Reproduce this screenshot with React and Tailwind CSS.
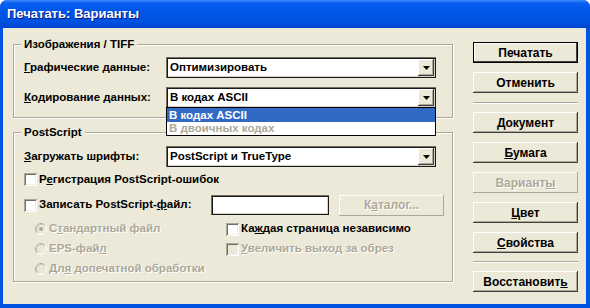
import React from "react";

const U = ({ children }) => <span className="underline underline-offset-[1px]">{children}</span>;

const dim = "text-[#aca899] [text-shadow:1px_1px_0_#fff]";
const raised = "shadow-[inset_-1px_-1px_#404040,inset_1px_1px_#fff,inset_-2px_-2px_#aca899]";
const sunken =
  "shadow-[inset_1px_1px_#716f64,inset_2px_2px_#1a1a1a,inset_-1px_-1px_#1a1a1a,inset_-2px_-2px_#d4d0c8]";

const ArrowButton = () => (
  <div className={`flex h-[17px] w-[16px] items-center justify-center bg-[#ece9d8] ${raised}`}>
    <svg width="7" height="4" viewBox="0 0 7 4">
      <path d="M0 0H7L3.5 4Z" fill="#000" />
    </svg>
  </div>
);

const Select = ({ value, children }) => (
  <div className={`relative flex h-[21px] w-[270px] items-center justify-between bg-white pl-[4px] pr-[2px] ${sunken}`}>
    <span>{value}</span>
    <ArrowButton />
    {children}
  </div>
);

const Check = ({ disabled }) => (
  <div
    className={`h-[13px] w-[13px] shrink-0 ${disabled ? "bg-[#ece9d8]" : "bg-white"} shadow-[inset_1px_1px_#aca899,inset_-1px_-1px_#fff,inset_2px_2px_#716f64,inset_-2px_-2px_#f1efe2]`}
  />
);

const Radio = ({ checked }) => (
  <svg width="12" height="12" viewBox="0 0 12 12" className="shrink-0">
    <circle cx="6" cy="6" r="5.5" fill="#ece9d8" stroke="#fff" />
    <path d="M2.11 9.89A5.5 5.5 0 0 1 9.89 2.11" fill="none" stroke="#aca899" />
    <path d="M2.82 9.18A4.5 4.5 0 0 1 9.18 2.82" fill="none" stroke="#c9c6b8" />
    {checked && <circle cx="6" cy="6" r="2" fill="#aca899" />}
  </svg>
);

const Btn = ({ children, def, disabled, className = "" }) => (
  <div
    className={`flex h-[21px] w-[105px] items-center justify-center bg-[#ece9d8] text-[12px] font-bold ${className} ${
      def
        ? "border border-black shadow-[inset_-1px_-1px_#404040,inset_1px_1px_#fff]"
        : disabled
        ? `${dim} shadow-[inset_-1px_-1px_#aca899,inset_1px_1px_#fff,inset_0_0_0_1px_#c9c6b8]`
        : `text-black ${raised}`
    }`}
  >
    {children}
  </div>
);

const Sep = ({ className = "" }) => (
  <div className={`h-[2px] w-[105px] border-t border-[#aca899] bg-white ${className}`} />
);

const Group = ({ title, className = "", children }) => (
  <div className={`relative border border-[#aca899] shadow-[inset_1px_1px_#fff,1px_1px_#fff] ${className}`}>
    <span className="absolute -top-[8px] left-[7px] bg-[#ece9d8] px-[3px] leading-[14px]">{title}</span>
    {children}
  </div>
);

export default function App() {
  return (
    <div className="flex h-[308px] w-[590px] flex-col overflow-hidden rounded-t-[7px] bg-[#0054e3] font-['Liberation_Sans',Arial,sans-serif] text-[11.5px] font-bold text-black">
      <div className="flex h-[28px] shrink-0 items-center bg-[linear-gradient(to_bottom,#3a8cff_0px,#0a5ff0_3px,#0058e8_10px,#0052e0_22px,#0044d0_28px)] pl-[7px] text-[13px] text-white [text-shadow:1px_1px_#0a1883]">
        Печатать: Варианты
      </div>
      <div className="ml-[3px] mr-[4px] mb-[4px] flex flex-1 bg-[#ece9d8]">
        <div className="ml-[10px] mt-[16px] w-[440px]">
          <Group title="Изображения / TIFF" className="h-[74px] pl-[10px] pt-[12px]">
            <div className="flex items-center">
              <span className="w-[142px]">
                <U>Г</U>рафические данные:
              </span>
              <Select value="Оптимизировать" />
            </div>
            <div className="mt-[9px] flex items-center">
              <span className="w-[142px]">
                <U>К</U>одирование данных:
              </span>
              <Select value="В кодах ASCII">
                <div className="absolute left-0 top-[20px] z-10 w-full border border-black bg-white">
                  <div className="flex h-[14px] items-center bg-[#316ac5] pl-[2px] leading-[14px] text-white">
                    В кодах ASCII
                  </div>
                  <div className={`h-[13px] pl-[2px] leading-[12px] ${dim}`}>В двоичных кодах</div>
                </div>
              </Select>
            </div>
          </Group>
          <Group title="PostScript" className="mt-[14px] h-[150px] pl-[10px] pt-[13px]">
            <div className="flex items-center">
              <span className="w-[142px]">
                <U>З</U>агружать шрифты:
              </span>
              <Select value="PostScript и TrueType" />
            </div>
            <div className="mt-[4px] flex h-[17px] items-center gap-[2px]">
              <Check />
              <span>
                Р<U>е</U>гистрация PostScript-ошибок
              </span>
            </div>
            <div className="mt-[7px] flex h-[20px] items-center">
              <div className="flex w-[187px] items-center gap-[2px]">
                <Check />
                <span>
                  Записать PostScript-<U>ф</U>айл:
                </span>
              </div>
              <div className={`h-[20px] w-[118px] bg-white ${sunken}`} />
              <Btn disabled className="ml-[10px] w-[101px]">
                К<U>а</U>талог...
              </Btn>
            </div>
            <div className="mt-[4px] grid grid-cols-[202px_1fr]">
              <div className={`flex h-[20px] items-center gap-[2px] pl-[11px] ${dim}`}>
                <Radio checked />
                <span>
                  С<U>т</U>андартный файл
                </span>
              </div>
              <div className="flex h-[20px] items-center gap-[2px]">
                <Check />
                <span>
                  Ка<U>ж</U>дая страница независимо
                </span>
              </div>
              <div className={`flex h-[20px] items-center gap-[2px] pl-[11px] ${dim}`}>
                <Radio />
                <span>
                  EPS-фай<U>л</U>
                </span>
              </div>
              <div className={`flex h-[20px] items-center gap-[2px] ${dim}`}>
                <Check disabled />
                <span>
                  <U>У</U>величить выход за обрез
                </span>
              </div>
              <div className={`flex h-[20px] items-center gap-[2px] pl-[11px] ${dim}`}>
                <Radio />
                <span>
                  Дл<U>я</U> допечатной обработки
                </span>
              </div>
            </div>
          </Group>
        </div>
        <div className="ml-[20px] mt-[14px] flex w-[105px] flex-col">
          <Btn def>Печатать</Btn>
          <Btn className="mt-[9px]">Отменить</Btn>
          <Sep className="mt-[9px]" />
          <Btn className="mt-[8px]">
            <U>Д</U>окумент
          </Btn>
          <Btn className="mt-[9px]">
            <U>Б</U>умага
          </Btn>
          <Btn disabled className="mt-[9px]">
            Вариант<U>ы</U>
          </Btn>
          <Btn className="mt-[9px]">
            <U>Ц</U>вет
          </Btn>
          <Btn className="mt-[9px]">
            <U>С</U>войства
          </Btn>
          <Sep className="mt-[8px]" />
          <Btn className="mt-[8px]">
            Восстановит<U>ь</U>
          </Btn>
        </div>
      </div>
    </div>
  );
}
